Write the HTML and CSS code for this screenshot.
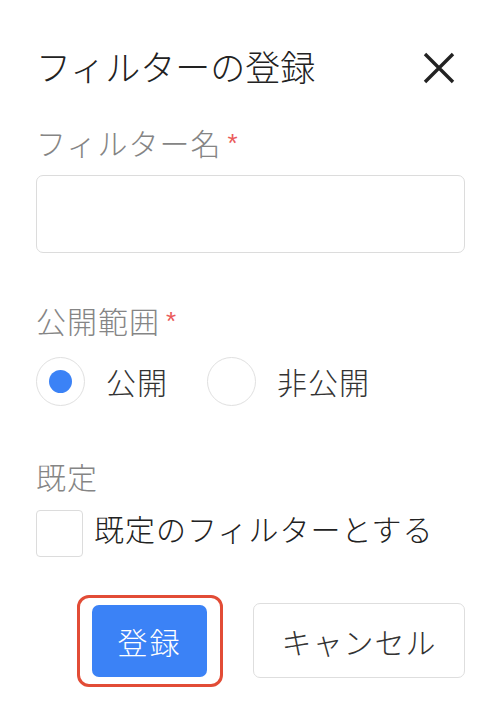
FILE: index.html
```html
<!DOCTYPE html>
<html lang="ja">
<head>
<meta charset="utf-8">
<link rel="stylesheet" href="styles.css">
</head>
<body>
<div class="dialog">
  <div class="header">
    <div class="title">フィルターの登録</div>
    <svg class="close" width="32" height="32" viewBox="0 0 32 32"><path d="M2 2L30 30M30 2L2 30" stroke="#222" stroke-width="3.4" fill="none"/></svg>
  </div>

  <div class="label label-first">フィルター名<span class="req">*</span></div>
  <div class="input"></div>

  <div class="label label-second">公開範囲<span class="req">*</span></div>
  <div class="radios">
    <div class="radio checked"><span class="dot"></span></div>
    <span class="opt">公開</span>
    <div class="radio"></div>
    <span class="opt">非公開</span>
  </div>

  <div class="label label-third">既定</div>
  <div class="check-row">
    <div class="checkbox"></div>
    <span class="check-text">既定のフィルターとする</span>
  </div>

  <div class="buttons">
    <div class="btn btn-primary">登録</div>
    <div class="btn btn-cancel">キャンセル</div>
  </div>
</div>
</body>
</html>
```

FILE: styles.css
```css
html, body {
  margin: 0;
  padding: 0;
  background: #ffffff;
}
body {
  font-family: "Noto Sans CJK JP", "Noto Sans", sans-serif;
  font-weight: 300;
}
.dialog {
  padding: 46px 35px 30px 36px;
}
.header {
  height: 44px;
  display: flex;
  align-items: center;
  justify-content: space-between;
}
.title {
  font-size: 35px;
  line-height: 40px;
  padding-bottom: 4px;
  color: #222;
}
.close {
  margin-right: 10px;
  display: block;
}
.label {
  font-size: 30px;
  line-height: 40px;
  color: #858585;
  letter-spacing: 1px;
  display: flex;
  align-items: flex-start;
}
.label-first { margin-top: 32px; }
.label-second { margin-top: 47px; }
.label-third { margin-top: 51px; }
.req {
  font-family: "Liberation Sans", sans-serif;
  font-weight: 400;
  color: #ea5a5a;
  font-size: 26px;
  line-height: 30px;
  margin-left: 6px;
  margin-top: 6px;
}
.input {
  margin-top: 13px;
  height: 78px;
  box-sizing: border-box;
  border: 1.5px solid #dcdcdc;
  border-radius: 7px;
}
.radios {
  margin-top: 17px;
  height: 48px;
  display: flex;
  align-items: center;
}
.radio {
  width: 49px;
  height: 49px;
  box-sizing: border-box;
  border: 1.5px solid #e0e0e0;
  border-radius: 50%;
  display: flex;
  align-items: center;
  justify-content: center;
}
.dot {
  width: 23px;
  height: 23px;
  border-radius: 50%;
  background: #3b82f6;
}
.opt {
  font-size: 30px;
  line-height: 40px;
  color: #333;
  letter-spacing: 1px;
  margin-left: 21px;
  margin-right: 39px;
}
.opt:last-child { margin-right: 0; }
.check-row {
  margin-top: 14px;
  display: flex;
  align-items: flex-start;
}
.checkbox {
  width: 47px;
  height: 47px;
  box-sizing: border-box;
  border: 1.5px solid #dcdcdc;
  border-radius: 4px;
}
.check-text {
  font-size: 30px;
  line-height: 36px;
  color: #222;
  letter-spacing: 1px;
  margin-left: 11px;
}
.buttons {
  margin-top: 46px;
  height: 75px;
  display: flex;
  align-items: center;
  justify-content: flex-end;
  gap: 46px;
}
.btn {
  box-sizing: border-box;
  display: flex;
  align-items: center;
  justify-content: center;
  font-size: 30px;
  letter-spacing: 2px;
  border-radius: 7px;
}
.btn-primary {
  position: relative;
  width: 115px;
  height: 72px;
  background: #3b82f6;
  color: #fff;
}
.btn-primary::after {
  content: "";
  position: absolute;
  left: -15px;
  right: -16px;
  top: -10px;
  bottom: -10px;
  border: 3px solid #e24c36;
  border-radius: 12px;
}
.btn-cancel {
  width: 212px;
  height: 75px;
  border: 1.5px solid #dedede;
  color: #333;
  letter-spacing: 1px;
}
```
